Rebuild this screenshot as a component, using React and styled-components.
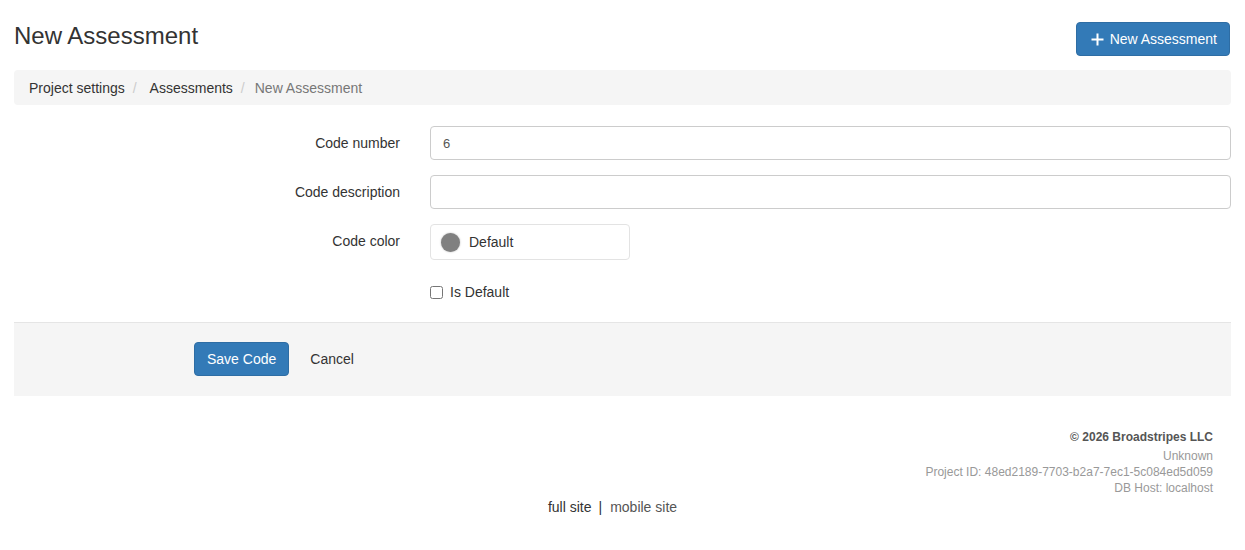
import React from 'react';
import styled, { createGlobalStyle } from 'styled-components';

const GlobalStyle = createGlobalStyle`
  body {
    margin: 0;
    font-family: "Liberation Sans", Arial, sans-serif;
    font-size: 14px;
    line-height: 1.42857;
    color: #333;
    background: #fff;
  }
  * { box-sizing: border-box; }
`;

const Page = styled.div`
  padding: 0 14px;
`;

const Header = styled.div`
  display: flex;
  justify-content: space-between;
  align-items: flex-start;
  padding-top: 20px;
  height: 70px;
`;

const Title = styled.h3`
  margin: 0;
  font-size: 24px;
  font-weight: 500;
  line-height: 1.1;
  color: #333;
  padding-top: 3px;
`;

const Button = styled.button`
  display: inline-flex;
  align-items: center;
  gap: 6px;
  height: 34px;
  padding: 6px 12px;
  font-family: inherit;
  font-size: 14px;
  color: #fff;
  background: #337ab7;
  border: 1px solid #2e6da4;
  border-radius: 4px;
  cursor: pointer;
`;

const HeaderButton = styled(Button)`
  margin-top: 2px;
  margin-right: 1px;
  padding: 6px 12px 6px 14px;
`;

const Breadcrumb = styled.ol`
  display: flex;
  align-items: center;
  height: 35px;
  margin: 0 0 21px;
  padding: 2px 15px 0;
  list-style: none;
  background: #f5f5f5;
  border-radius: 4px;
`;

const Crumb = styled.li`
  color: ${(p) => (p.$active ? '#777' : '#333')};
  &:not(:first-child)::before {
    content: '/';
    padding: 0 ${(p) => (p.$active ? '10px' : '13px')} 0 8px;
    color: #ccc;
  }
`;

const Form = styled.form`
  display: flex;
  flex-direction: column;
  gap: 15px;
`;

const Row = styled.div`
  display: grid;
  grid-template-columns: 386px 1fr;
  column-gap: 30px;
  align-items: start;
`;

const Label = styled.label`
  text-align: right;
  font-weight: 400;
  padding-top: 8px;
`;

const Input = styled.input`
  width: 100%;
  height: 34px;
  padding: 6px 12px;
  font-family: inherit;
  font-size: 13px;
  color: #555;
  border: 1px solid #ccc;
  border-radius: 4px;
  outline: none;
`;

const ColorBox = styled.div`
  display: flex;
  align-items: center;
  gap: 9px;
  width: 200px;
  height: 36px;
  padding: 1px 10px 0;
  border: 1px solid #e3e3e3;
  border-radius: 4px;
`;

const Swatch = styled.span`
  width: 19px;
  height: 19px;
  border-radius: 50%;
  background: ${(p) => p.$color};
  box-shadow: 0 0 2px rgba(0, 0, 0, 0.3);
`;

const CheckLabel = styled.label`
  display: flex;
  align-items: center;
  gap: 7px;
  padding-top: 8px;
  grid-column: 2;
`;

const Check = styled.input`
  margin: 0;
  width: 13px;
  height: 13px;
`;

const Actions = styled.div`
  display: flex;
  align-items: center;
  gap: 9px;
  margin-top: 19px;
  padding: 19px 0 20px 180px;
  background: #f5f5f5;
  border-top: 1px solid #e5e5e5;
`;

const LinkButton = styled.button`
  background: none;
  border: none;
  padding: 6px 12px;
  font-family: inherit;
  font-size: 14px;
  color: #333;
  cursor: pointer;
`;

const Footer = styled.footer`
  padding: 33px 18px 0 0;
  text-align: right;
  font-size: 12px;
  line-height: 16px;
  color: #999;
`;

const Copyright = styled.div`
  font-weight: 700;
  color: #555;
  margin-bottom: 3px;
`;

const SiteLinks = styled.div`
  padding: 2px 20px 0 0;
  text-align: center;
  color: #333;
`;

const SiteLink = styled.span`
  color: ${(p) => (p.$muted ? '#555' : '#333')};
`;

const Sep = styled.span`
  padding: 0 8px 0 7px;
`;

const PlusIcon = () => (
  <svg width="13" height="13" viewBox="0 0 13 13">
    <path d="M6.5 0.5v12M0.5 6.5h12" stroke="#fff" strokeWidth="2" />
  </svg>
);

export default function App() {
  return (
    <>
      <GlobalStyle />
      <Page>
        <Header>
          <Title>New Assessment</Title>
          <HeaderButton>
            <PlusIcon />
            New Assessment
          </HeaderButton>
        </Header>
        <Breadcrumb>
          <Crumb>Project settings</Crumb>
          <Crumb>Assessments</Crumb>
          <Crumb $active>New Assessment</Crumb>
        </Breadcrumb>
        <Form>
          <Row>
            <Label>Code number</Label>
            <Input defaultValue="6" />
          </Row>
          <Row>
            <Label>Code description</Label>
            <Input />
          </Row>
          <Row>
            <Label>Code color</Label>
            <ColorBox>
              <Swatch $color="#808080" />
              Default
            </ColorBox>
          </Row>
          <Row>
            <CheckLabel>
              <Check type="checkbox" />
              Is Default
            </CheckLabel>
          </Row>
        </Form>
        <Actions>
          <Button>Save Code</Button>
          <LinkButton>Cancel</LinkButton>
        </Actions>
        <Footer>
          <Copyright>© 2026 Broadstripes LLC</Copyright>
          <div>Unknown</div>
          <div>Project ID: 48ed2189-7703-b2a7-7ec1-5c084ed5d059</div>
          <div>DB Host: localhost</div>
        </Footer>
        <SiteLinks>
          <SiteLink>full site</SiteLink>
          <Sep>|</Sep>
          <SiteLink $muted>mobile site</SiteLink>
        </SiteLinks>
      </Page>
    </>
  );
}
